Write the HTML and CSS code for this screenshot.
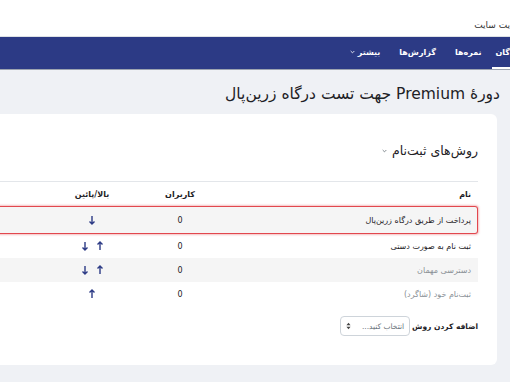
FILE: index.html
```html
<!DOCTYPE html>
<html lang="fa" dir="rtl">
<head>
    <meta charset="UTF-8">
    <meta name="viewport" content="width=device-width, initial-scale=1.0">
    <title>روش‌های ثبت‌نام</title>
    <link rel="stylesheet" href="styles.css">
</head>
<body>
    <header class="topbar">
        <span class="site-link">یت سایت</span>
    </header>

    <nav class="navbar">
        <a class="nav-item active" href="#">گان</a>
        <a class="nav-item" href="#">نمره‌ها</a>
        <a class="nav-item wide" href="#">گزارش‌ها</a>
        <a class="nav-item" href="#">بیشتر
            <svg class="chevron" viewBox="0 0 6 4"><path d="M0.8 0.8L3 3 5.2 0.8"/></svg>
        </a>
    </nav>

    <main class="page">
        <h1 class="page-title">دورهٔ Premium جهت تست درگاه زرین‌پال</h1>

        <section class="card">
            <h2 class="card-title">روش‌های ثبت‌نام
                <svg class="chevron dark" viewBox="0 0 6 4"><path d="M0.8 0.8L3 3 5.2 0.8"/></svg>
            </h2>

            <div class="methods">
                <div class="row head">
                    <div class="cell name">نام</div>
                    <div class="cell center">کاربران</div>
                    <div class="cell center">بالا/پائین</div>
                    <div class="cell"></div>
                </div>

                <div class="row striped highlight">
                    <div class="cell name">پرداخت از طریق درگاه زرین‌پال</div>
                    <div class="cell center">0</div>
                    <div class="cell center arrows">
                        <svg class="arrow" viewBox="0 0 8 10"><path d="M4 1v8M1.5 6.5L4 9l2.5-2.5"/></svg>
                    </div>
                    <div class="cell"></div>
                </div>

                <div class="row">
                    <div class="cell name">ثبت نام به صورت دستی</div>
                    <div class="cell center">0</div>
                    <div class="cell center arrows">
                        <svg class="arrow" viewBox="0 0 8 10"><path d="M4 9V1M1.5 3.5L4 1l2.5 2.5"/></svg>
                        <svg class="arrow" viewBox="0 0 8 10"><path d="M4 1v8M1.5 6.5L4 9l2.5-2.5"/></svg>
                    </div>
                    <div class="cell"></div>
                </div>

                <div class="row striped">
                    <div class="cell name dimmed">دسترسی مهمان</div>
                    <div class="cell center">0</div>
                    <div class="cell center arrows">
                        <svg class="arrow" viewBox="0 0 8 10"><path d="M4 9V1M1.5 3.5L4 1l2.5 2.5"/></svg>
                        <svg class="arrow" viewBox="0 0 8 10"><path d="M4 1v8M1.5 6.5L4 9l2.5-2.5"/></svg>
                    </div>
                    <div class="cell"></div>
                </div>

                <div class="row">
                    <div class="cell name dimmed">ثبت‌نام خود (شاگرد)</div>
                    <div class="cell center">0</div>
                    <div class="cell center arrows">
                        <svg class="arrow" viewBox="0 0 8 10"><path d="M4 9V1M1.5 3.5L4 1l2.5 2.5"/></svg>
                    </div>
                    <div class="cell"></div>
                </div>
            </div>

            <div class="add-method">
                <label class="add-label">اضافه کردن روش</label>
                <div class="select">
                    <span>انتخاب کنید...</span>
                    <svg class="updown" viewBox="0 0 6 9"><path d="M3 0.5L5.5 3.5H0.5Z M3 8.5L0.5 5.5H5.5Z"/></svg>
                </div>
            </div>
        </section>
    </main>
</body>
</html>
```

FILE: styles.css
```css
html, body {
    margin: 0;
    padding: 0;
    overflow-x: hidden;
}

body {
    font-family: "DejaVu Sans", "Liberation Sans", sans-serif;
    background-color: #eff1f5;
    color: #1d2125;
    width: 510px;
    height: 382px;
    overflow: hidden;
}

.topbar {
    height: 37px;
    background-color: #fff;
    border-bottom: 1px solid #dee2e6;
    display: flex;
    align-items: flex-end;
    box-sizing: border-box;
}

.site-link {
    font-size: 9px;
    color: #333;
    padding-bottom: 6px;
}

.navbar {
    height: 32px;
    background-color: #2c3a85;
    border-bottom: 1px solid #9ca3b0;
    display: flex;
    align-items: stretch;
}

.nav-item {
    color: #fff;
    text-decoration: none;
    font-size: 8px;
    font-weight: bold;
    padding: 0 7px;
    display: flex;
    align-items: center;
    gap: 3px;
    border-bottom: 2px solid transparent;
}

.nav-item.active {
    border-bottom-color: #fff;
    padding: 0 0 0 4px;
    margin-left: 3px;
}

.nav-item.wide {
    padding: 0 12px;
}

.chevron {
    width: 5px;
    height: 4px;
    fill: none;
    stroke: #fff;
    stroke-width: 1;
}

.chevron.dark {
    stroke: #6a737b;
    margin-right: 5px;
}

.page {
    padding: 12px 10px 0 0;
}

.page-title {
    margin: 0 0 8px;
    font-size: 15.5px;
    font-weight: 500;
    line-height: 24px;
    color: #1d2125;
}

.card {
    width: 540px;
    margin-right: 3px;
    background-color: #fff;
    border-radius: 6px;
    padding: 28px 19px 29px 0;
    box-sizing: border-box;
}

.card-title {
    margin: 0 0 21px;
    font-size: 12.5px;
    font-weight: 500;
    line-height: 18px;
    display: flex;
    align-items: center;
}

.methods {
    border-top: 1px solid #e3e6ea;
}

.row {
    display: grid;
    grid-template-columns: 248px 100px 76px 1fr;
    height: 24px;
    align-items: center;
    font-size: 8px;
}

.row.head {
    height: 24px;
    font-weight: bold;
    color: #1d2125;
}

.row.striped {
    background-color: #f5f5f5;
}

.row.highlight {
    height: 28px;
    border-radius: 0 3px 3px 0;
    box-shadow: inset 0 0 0 1px #e2474e, 0 0 2px 1px rgba(226, 71, 78, 0.35);
}

.cell {
    padding: 0 7px;
}

.cell.center {
    text-align: center;
}

.dimmed {
    color: #8a9096;
}

.arrows {
    display: flex;
    justify-content: center;
    gap: 7px;
}

.arrow {
    width: 8px;
    height: 10px;
    fill: none;
    stroke: #2c3a85;
    stroke-width: 1.4;
}

.add-method {
    display: flex;
    align-items: center;
    gap: 2px;
    margin-top: 10px;
}

.add-label {
    font-size: 7.5px;
    font-weight: bold;
    color: #1d2125;
}

.select {
    height: 20px;
    width: 70px;
    box-sizing: border-box;
    border: 1px solid #ced4da;
    border-radius: 4px;
    display: flex;
    align-items: center;
    justify-content: space-between;
    padding: 0 5px;
    font-size: 7.5px;
    color: #6a737b;
}

.updown {
    width: 5px;
    height: 8px;
    fill: #444;
}
```
